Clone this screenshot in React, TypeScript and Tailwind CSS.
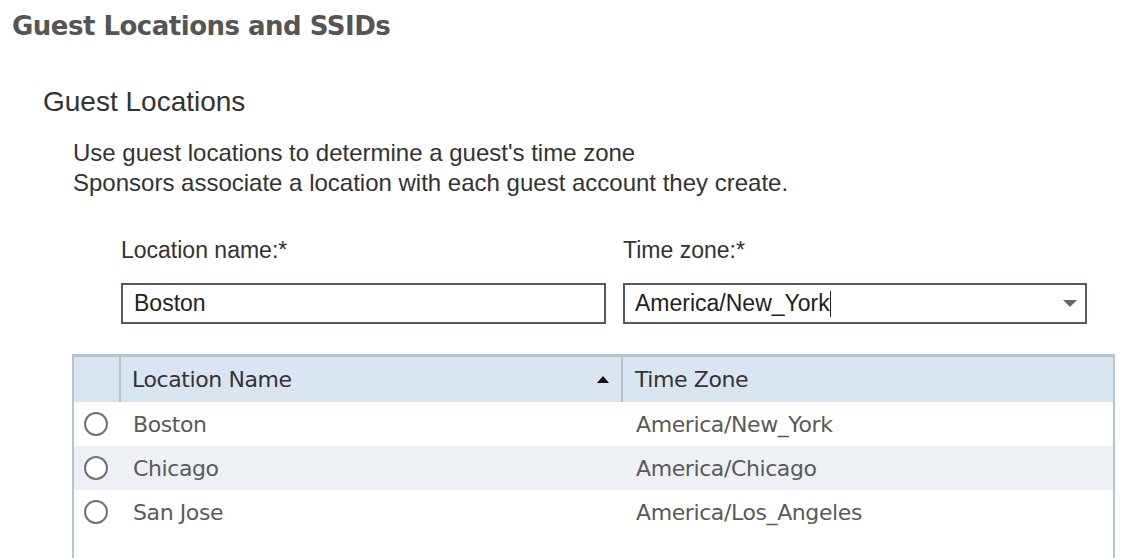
import { useState } from "react";

const ROWS = [
  { name: "Boston", zone: "America/New_York" },
  { name: "Chicago", zone: "America/Chicago" },
  { name: "San Jose", zone: "America/Los_Angeles" },
];

const tahoma = { fontFamily: "'DejaVu Sans', Verdana, sans-serif" };

export default function App() {
  const [selected, setSelected] = useState<number | null>(null);

  return (
    <div className="w-[1134px] h-[558px] overflow-hidden bg-white text-[#333]" style={{ fontFamily: "'Liberation Sans', Arial, sans-serif" }}>
      {/* Page title */}
      <h1
        className="pl-[12px] pt-[11px] text-[26px] font-bold leading-[30px] tracking-[-0.5px] text-[#555]"
        style={tahoma}
      >
        Guest Locations and SSIDs
      </h1>

      <div className="pl-[43px] pt-[47px]">
        <h2 className="text-[28px] leading-[28px]">Guest Locations</h2>

        <div className="pl-[30px] pt-[22px] text-[24px] leading-[30px]">
          <p>Use guest locations to determine a guest's time zone</p>
          <p>Sponsors associate a location with each guest account they create.</p>
        </div>

        {/* Form */}
        <div className="flex gap-[17px] pl-[78px] pt-[40px]">
          <div className="flex flex-col w-[485px]">
            <label className="text-[23px] leading-[24px]">Location name:*</label>
            <div className="mt-[21px] h-[41px] border-2 border-[#4f5b62] flex items-center px-[11px] text-[23px] text-[#222]">
              Boston
            </div>
          </div>
          <div className="flex flex-col w-[464px]">
            <label className="text-[23px] leading-[24px]">Time zone:*</label>
            <div className="mt-[21px] h-[41px] border-2 border-[#4f5b62] flex items-center pl-[10px] pr-[8px] text-[23px] text-[#222]">
              <span>America/New_York</span>
              <span className="w-[1.5px] h-[26px] bg-[#222]" />
              <span className="ml-auto">
                <svg width="14" height="8" viewBox="0 0 14 8">
                  <path d="M0 0 H14 L7 7 Z" fill="#666" />
                </svg>
              </span>
            </div>
          </div>
        </div>

        {/* Table */}
        <div className="ml-[29px] mt-[30px] w-[1043px] border-l-2 border-r-2 border-t-[3px] border-[#b5c4d1] h-[220px]" style={tahoma}>
          <div className="flex h-[45px] bg-[#d9e5f0] text-[#333] text-[22px] tracking-[-0.4px]">
            <div className="w-[47px] border-r-2 border-[#b5c4d1]" />
            <div className="w-[502px] flex items-center pl-[11px] pr-[12px] border-r-2 border-[#b5c4d1]">
              <span>Location Name</span>
              <svg className="ml-auto" width="12" height="7" viewBox="0 0 12 7">
                <path d="M0 7 L6 0 L12 7 Z" fill="#111" />
              </svg>
            </div>
            <div className="flex-1 flex items-center pl-[12px]">Time Zone</div>
          </div>
          {ROWS.map((r, i) => (
            <div
              key={r.name}
              className={`flex h-[44px] items-center text-[22px] tracking-[-0.4px] text-[#5a5a5a] ${i % 2 === 1 ? "bg-[#edf1f5]" : "bg-white"}`}
              onClick={() => setSelected(i)}
            >
              <div className="w-[49px] flex items-center pl-[10px]">
                <span className="w-[24px] h-[24px] rounded-full border-2 border-[#707070] bg-white flex items-center justify-center">
                  {selected === i && <span className="w-[10px] h-[10px] rounded-full bg-[#333]" />}
                </span>
              </div>
              <div className="w-[502px] pl-[10px]">{r.name}</div>
              <div className="flex-1 pl-[11px]">{r.zone}</div>
            </div>
          ))}
        </div>
      </div>
    </div>
  );
}
